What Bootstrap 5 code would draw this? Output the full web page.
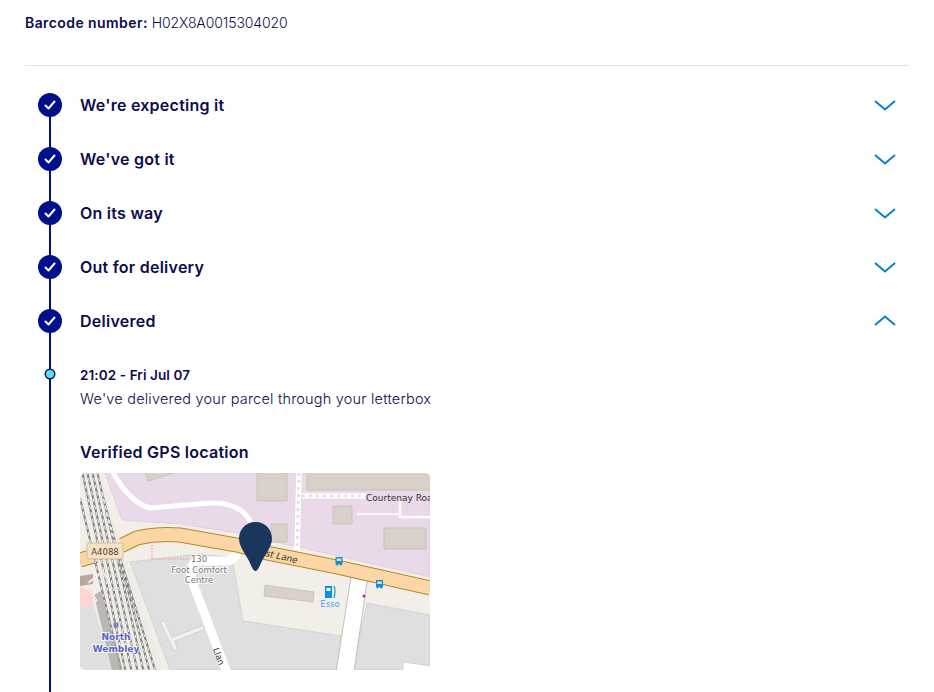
<!DOCTYPE html>
<html lang="en">
<head>
<meta charset="utf-8">
<title>Parcel tracking</title>
<link href="https://cdn.jsdelivr.net/npm/bootstrap@5.3.0/dist/css/bootstrap.min.css" rel="stylesheet">
<style>
body{font-family:Inter,"Liberation Sans",sans-serif;color:#0b0c4c;background:#fff}
.page-wrap{padding:12px 25px 0}
.barcode-line{font-size:14px;line-height:21px;margin:0 0 32px;font-weight:300;letter-spacing:-.1px}
.barcode-line strong{font-weight:600;letter-spacing:.42px}
.page-rule{margin:0 0 12px;border:0;border-top:1px solid #d9e5ec;opacity:1}
.timeline{position:relative;padding-bottom:22px}
.timeline::before{content:"";position:absolute;left:24px;top:27px;bottom:0;width:2px;background:#000f8c}
.step-row{height:54px;position:relative;padding-left:13px;padding-right:13px}
.step-dot{width:24px;height:24px;border-radius:50%;background:#000f8c;flex:none;margin-right:18px}
.step-title{font-size:16px;font-weight:600;line-height:24px;color:#0b0c4c;letter-spacing:.25px}
.chev-down{margin-top:1px}
.chev-up{margin-bottom:2px}
.event-block{position:relative;padding-left:55px;padding-top:15px}
.event-marker{position:absolute;left:21px;top:22px;width:8px;height:8px;border-radius:50%;background:#5fdcea;box-shadow:0 0 0 1.5px #0b1a6b}
.event-time{font-size:13.5px;font-weight:600;line-height:24px;letter-spacing:.1px}
.event-text{font-size:14.5px;font-weight:300;line-height:24px;margin:0 0 29px;letter-spacing:.2px}
.map-title{font-size:16px;font-weight:600;line-height:24px;margin:0 0 9px;letter-spacing:.25px}
.map-box{display:block;width:350px;height:197px;border-radius:5px;overflow:hidden}
.map-box text{font-family:"DejaVu Sans",sans-serif}
.map-halo{paint-order:stroke;stroke:#ffffffcc;stroke-width:2px}
</style>
</head>
<body>
<main class="page-wrap">
  <p class="barcode-line"><strong>Barcode number:</strong> H02X8A0015304020</p>
  <hr class="page-rule">
  <div class="timeline">
    <div class="step-row d-flex align-items-center">
      <span class="step-dot d-flex align-items-center justify-content-center"><svg width="14" height="14" viewBox="0 0 14 14"><path d="M2.500 7.500l3 3L11.500 3.500" fill="none" stroke="#fff" stroke-width="2" stroke-linecap="round" stroke-linejoin="round"/></svg></span>
      <span class="step-title flex-grow-1">We're expecting it</span>
      <svg class="chev-down" width="22" height="11" viewBox="0 0 22 11"><path d="M1 1l10 8.500L21 1" fill="none" stroke="#0a7fc9" stroke-width="2"/></svg>
    </div>
    <div class="step-row d-flex align-items-center">
      <span class="step-dot d-flex align-items-center justify-content-center"><svg width="14" height="14" viewBox="0 0 14 14"><path d="M2.500 7.500l3 3L11.500 3.500" fill="none" stroke="#fff" stroke-width="2" stroke-linecap="round" stroke-linejoin="round"/></svg></span>
      <span class="step-title flex-grow-1">We've got it</span>
      <svg class="chev-down" width="22" height="11" viewBox="0 0 22 11"><path d="M1 1l10 8.500L21 1" fill="none" stroke="#0a7fc9" stroke-width="2"/></svg>
    </div>
    <div class="step-row d-flex align-items-center">
      <span class="step-dot d-flex align-items-center justify-content-center"><svg width="14" height="14" viewBox="0 0 14 14"><path d="M2.500 7.500l3 3L11.500 3.500" fill="none" stroke="#fff" stroke-width="2" stroke-linecap="round" stroke-linejoin="round"/></svg></span>
      <span class="step-title flex-grow-1">On its way</span>
      <svg class="chev-down" width="22" height="11" viewBox="0 0 22 11"><path d="M1 1l10 8.500L21 1" fill="none" stroke="#0a7fc9" stroke-width="2"/></svg>
    </div>
    <div class="step-row d-flex align-items-center">
      <span class="step-dot d-flex align-items-center justify-content-center"><svg width="14" height="14" viewBox="0 0 14 14"><path d="M2.500 7.500l3 3L11.500 3.500" fill="none" stroke="#fff" stroke-width="2" stroke-linecap="round" stroke-linejoin="round"/></svg></span>
      <span class="step-title flex-grow-1">Out for delivery</span>
      <svg class="chev-down" width="22" height="11" viewBox="0 0 22 11"><path d="M1 1l10 8.500L21 1" fill="none" stroke="#0a7fc9" stroke-width="2"/></svg>
    </div>
    <div class="step-row d-flex align-items-center">
      <span class="step-dot d-flex align-items-center justify-content-center"><svg width="14" height="14" viewBox="0 0 14 14"><path d="M2.500 7.500l3 3L11.500 3.500" fill="none" stroke="#fff" stroke-width="2" stroke-linecap="round" stroke-linejoin="round"/></svg></span>
      <span class="step-title flex-grow-1">Delivered</span>
      <svg class="chev-up" width="22" height="11" viewBox="0 0 22 11"><path d="M1 10l10-8.500L21 10" fill="none" stroke="#0a7fc9" stroke-width="2"/></svg>
    </div>
    <div class="event-block">
      <span class="event-marker"></span>
      <div class="event-time">21:02 - Fri Jul 07</div>
      <p class="event-text">We've delivered your parcel through your letterbox</p>
      <div class="map-title">Verified GPS location</div>
      <svg class="map-box" viewBox="0 0 350 197" role="img" aria-label="Map of the delivery location">
        <rect width="350" height="197" fill="#f2efe9"/>
        <path d="M25 0L42 47L100 51L157 60L350 104V0Z" fill="#ead9e8" stroke="#d5c8d3" stroke-width=".6"/>
        <path d="M50 89L118 81L152 84L163 148L262 163L257 197H90Z" fill="#dfdfdf" stroke="#c8c8c8" stroke-width=".6"/>
        <path d="M287 130L350 142V197H272Z" fill="#dfdfdf" stroke="#c8c8c8" stroke-width=".6"/>
        <path d="M0 135L13 130L33 197H0Z" fill="#dfdfdf"/>
        <path d="M0 113L13 120V130L0 135Z" fill="#fdd6d4"/>
        <g fill="#d9d0c9" stroke="#c8bcb1" stroke-width=".8">
          <path d="M177 -2H207V28H177Z"/>
          <path d="M227 -2H352V17H227Z"/>
          <path d="M253 33H272V51H253Z"/>
          <path d="M304 55H346V76H304Z"/>
          <path d="M191 51H207V69H191Z"/>
          <path d="M185 112L234 119L233 129L184 123Z"/>
          <path d="M65 -2H100L68 8Z"/>
        </g>
        <g fill="none" stroke-linecap="round" stroke-linejoin="round">
          <path d="M32 -2Q50 30 70 35L130 30Q160 29 170 48" stroke="#fff" stroke-width="5"/>
          <path d="M277 41H320" stroke="#fff" stroke-width="1.500"/>
          <path d="M320 29V44H352" stroke="#fff" stroke-width="2.500"/>
          <path d="M219 0L217 79M222 23H285" stroke="#fff" stroke-width="5.500" stroke-linecap="butt"/>
          <path d="M219 0L217 79M222 23H285" stroke="#e2e2e2" stroke-width="3" stroke-dasharray="3 4" stroke-linecap="butt"/>
          <path d="M92 167L122 155M83 150L95 175" stroke="#cfcfcf" stroke-width="5"/>
          <path d="M92 167L122 155M83 150L95 175" stroke="#f1f1f1" stroke-width="3.500"/>
          <path d="M157 78Q155 88 145 88H118Q108 90 112 108L147 200" stroke="#fff" stroke-width="9"/>
        </g>
        <path d="M271 104L287 108L274 199H256Z" fill="#fff" stroke="#aaa" stroke-width=".7"/>
        <path d="M0 87Q28 80 57 65Q78 60 100 62L157 72L187 80L257 94L350 115" fill="none" stroke="#b8862f" stroke-width="15"/>
        <path d="M0 87Q28 80 57 65Q78 60 100 62L157 72L187 80L257 94L350 115" fill="none" stroke="#fcd6a4" stroke-width="13"/>
        <path d="M0 0H17L84 197H40Z" fill="#efece6"/>
        <g fill="none" stroke="#7d7d7d" stroke-width="2">
          <path d="M2 -2L46 200M7 -2L52 200M12 -2L58 200M17 -2L64 200M0 25L42 200M22 20L70 200M26 40L76 200"/>
        </g>
        <g fill="none" stroke="#f4f4f4" stroke-width="1" stroke-dasharray="4 3">
          <path d="M2 -2L46 200M7 -2L52 200M12 -2L58 200M17 -2L64 200M0 25L42 200M22 20L70 200M26 40L76 200"/>
        </g>
        <path d="M14 122L21 118L42 197H32Z" fill="#a5a5a5" opacity=".75"/>
        <path d="M0 103L13 101V111L0 113Z" fill="#b6a99b"/>
        <g fill="none" stroke="#fff" stroke-width="2"><path d="M8 110L23 98L31 115M8 112L17 129"/></g>
        <g fill="none" stroke="#f58b86" stroke-width="1" stroke-dasharray="1.500 1.500"><path d="M8 110L23 98L31 115M8 112L17 129M72 72V86H108"/></g>
        <rect x="7" y="70" width="36" height="16" rx="2" fill="#f6e1c3" stroke="#cbb594" stroke-width=".8"/>
        <text x="25" y="81.500" font-size="8.500" text-anchor="middle" fill="#4d4437">A4088</text>
        <g text-anchor="middle" font-size="8.500" fill="#777">
          <text class="map-halo" x="119" y="89">130</text>
          <text class="map-halo" x="119" y="100">Foot Comfort</text>
          <text class="map-halo" x="119" y="110">Centre</text>
        </g>
        <rect x="33.500" y="149.500" width="5" height="5" fill="#7b86c2"/>
        <g text-anchor="middle" font-size="9" font-weight="700" fill="#5566c0">
          <text class="map-halo" x="36" y="167">North</text>
          <text class="map-halo" x="36" y="179">Wembley</text>
        </g>
        <text transform="translate(133 176) rotate(70)" font-size="8.500" fill="#333">Llan</text>
        <text x="286" y="28" font-size="9" fill="#333">Courtenay Roa</text>
        <text transform="translate(185 83) rotate(13)" font-size="9" font-style="italic" fill="#333">st Lane</text>
        <g fill="#0a93dc">
          <path d="M255.500 84h7v7.500h-1v1h-1.500v-1h-2.500v1H256v-1h-.5Z"/>
          <path d="M296 107h7v7.500h-1v1h-1.500v-1h-2.500v1H297v-1h-1Z"/>
        </g>
        <path d="M256.700 85.500h4.600v2.500h-4.600ZM297.200 108.500h4.600v2.500h-4.600Z" fill="#fcd6a4"/>
        <path d="M245 113h7v12h-7Z" fill="#0a93dc"/>
        <path d="M246.500 115h4v3h-4Z" fill="#fff"/>
        <path d="M254 113Q256 118 254 125" fill="none" stroke="#0a93dc" stroke-width="1.200"/>
        <text x="250" y="134" font-size="8.500" text-anchor="middle" fill="#4a9cf0">Esso</text>
        <circle cx="284" cy="123" r="1.600" fill="#aa33bb"/>
        <path d="M323 189L352 193V199H323Z" fill="#fff" stroke="#bbb" stroke-width=".5"/>
        <path d="M175.500 49C186 49 192 57 192 66C192 73 185 82 182 88C180 92 178 98 175.500 98C173 98 171 92 169 88C166 82 159 73 159 66C159 57 165 49 175.500 49Z" fill="#1b365d"/>
      </svg>
    </div>
  </div>
</main>
<script src="https://cdn.jsdelivr.net/npm/bootstrap@5.3.0/dist/js/bootstrap.bundle.min.js"></script>
</body>
</html>
